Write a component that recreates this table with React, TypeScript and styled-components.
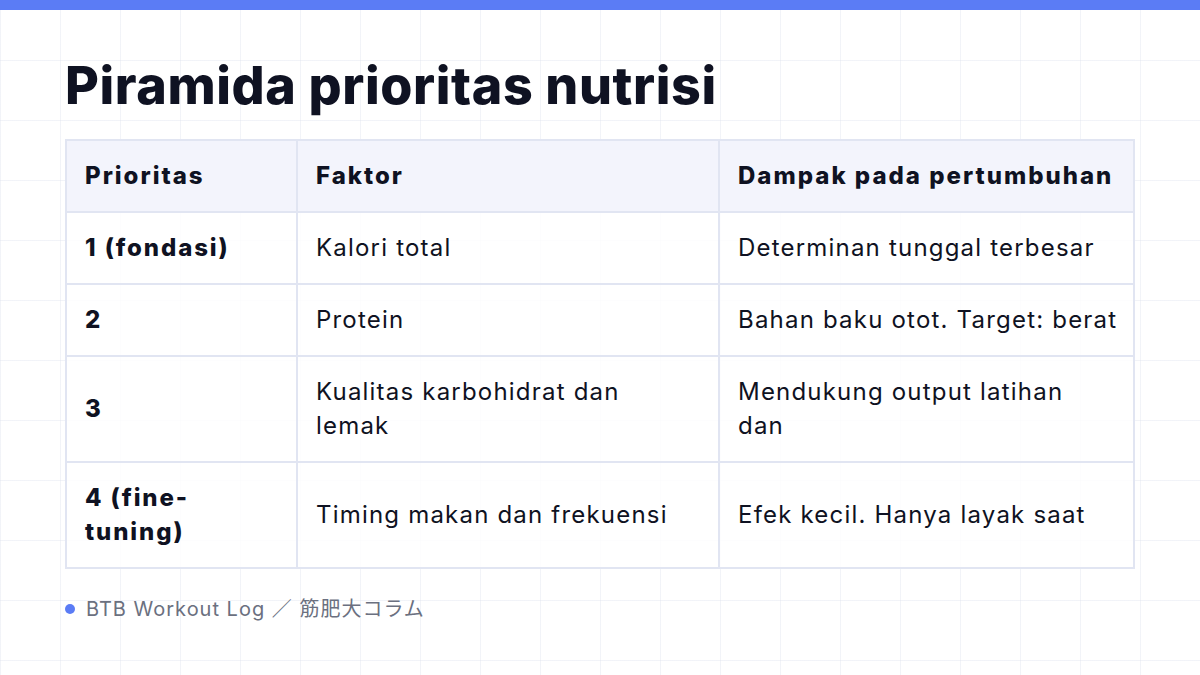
import React from "react";
import styled, { createGlobalStyle } from "styled-components";

const GlobalStyle = createGlobalStyle`
  html, body {
    margin: 0;
    padding: 0;
  }
  body {
    width: 1200px;
    height: 675px;
    overflow: hidden;
    font-family: Inter, "Noto Sans", "Noto Sans CJK JP", sans-serif;
    color: #0f1222;
    background-color: #ffffff;
    background-image:
      linear-gradient(to right, rgba(226, 230, 240, 0.45) 1px, transparent 1px),
      linear-gradient(to bottom, rgba(226, 230, 240, 0.45) 1px, transparent 1px);
    background-size: 60px 60px;
  }
`;

const Slide = styled.div`
  width: 1200px;
  height: 675px;
  display: flex;
  flex-direction: column;
`;

const TopBar = styled.div`
  height: 10px;
  background: #5b7cf5;
  flex-shrink: 0;
`;

const Content = styled.div`
  padding: 0 65px;
  display: flex;
  flex-direction: column;
`;

const Title = styled.h1`
  margin: 44px 0 0;
  font-size: 52px;
  line-height: 64px;
  font-weight: 800;
  letter-spacing: 0.6px;
  color: #0f1222;
`;

const Table = styled.table`
  margin-top: 21px;
  width: 1068px;
  border-collapse: collapse;
  table-layout: fixed;
  border: 2px solid #e1e5f2;
`;

const HeadCell = styled.th`
  background: #f3f4fc;
  border: 2px solid #e1e5f2;
  padding: 18px 18px;
  text-align: left;
  font-size: 24px;
  line-height: 34px;
  font-weight: 800;
  letter-spacing: 2px;
  color: #0f1222;
  &:last-child {
    padding-right: 8px;
  }
`;

const Cell = styled.td<{ $strong?: boolean }>`
  background: rgba(255, 255, 255, 0.82);
  border: 2px solid #e1e5f2;
  padding: 18px 18px;
  text-align: left;
  vertical-align: middle;
  white-space: pre-line;
  font-size: 24px;
  line-height: 34px;
  font-weight: ${(p) => (p.$strong ? 800 : 400)};
  letter-spacing: ${(p) => (p.$strong ? "1.9px" : "1.2px")};
  color: #0f1222;
  &:last-child {
    padding-right: 8px;
  }
`;

const Footer = styled.div`
  margin-top: 28px;
  display: flex;
  align-items: center;
  gap: 11px;
  font-size: 20px;
  line-height: 24px;
  letter-spacing: 1px;
  color: #6b7080;
  font-family: Inter, "Noto Sans CJK JP", sans-serif;
`;

const Dot = styled.span`
  width: 10px;
  height: 10px;
  border-radius: 50%;
  background: #5b7cf5;
  flex-shrink: 0;
`;

const rows: [string, string, string][] = [
  ["1 (fondasi)", "Kalori total", "Determinan tunggal terbesar"],
  ["2", "Protein", "Bahan baku otot. Target: berat"],
  ["3", "Kualitas karbohidrat dan lemak", "Mendukung output latihan\ndan"],
  ["4 (fine-tuning)", "Timing makan dan frekuensi", "Efek kecil. Hanya layak saat"],
];

export default function App() {
  return (
    <>
      <GlobalStyle />
      <Slide>
        <TopBar />
        <Content>
          <Title>Piramida prioritas nutrisi</Title>
          <Table>
            <colgroup>
              <col style={{ width: 231 }} />
              <col style={{ width: 422 }} />
              <col style={{ width: 415 }} />
            </colgroup>
            <thead>
              <tr>
                <HeadCell>Prioritas</HeadCell>
                <HeadCell>Faktor</HeadCell>
                <HeadCell>Dampak pada pertumbuhan</HeadCell>
              </tr>
            </thead>
            <tbody>
              {rows.map((r) => (
                <tr key={r[0]}>
                  <Cell $strong>{r[0]}</Cell>
                  <Cell>{r[1]}</Cell>
                  <Cell>{r[2]}</Cell>
                </tr>
              ))}
            </tbody>
          </Table>
          <Footer>
            <Dot />
            <span>BTB Workout Log ／ 筋肥大コラム</span>
          </Footer>
        </Content>
      </Slide>
    </>
  );
}
